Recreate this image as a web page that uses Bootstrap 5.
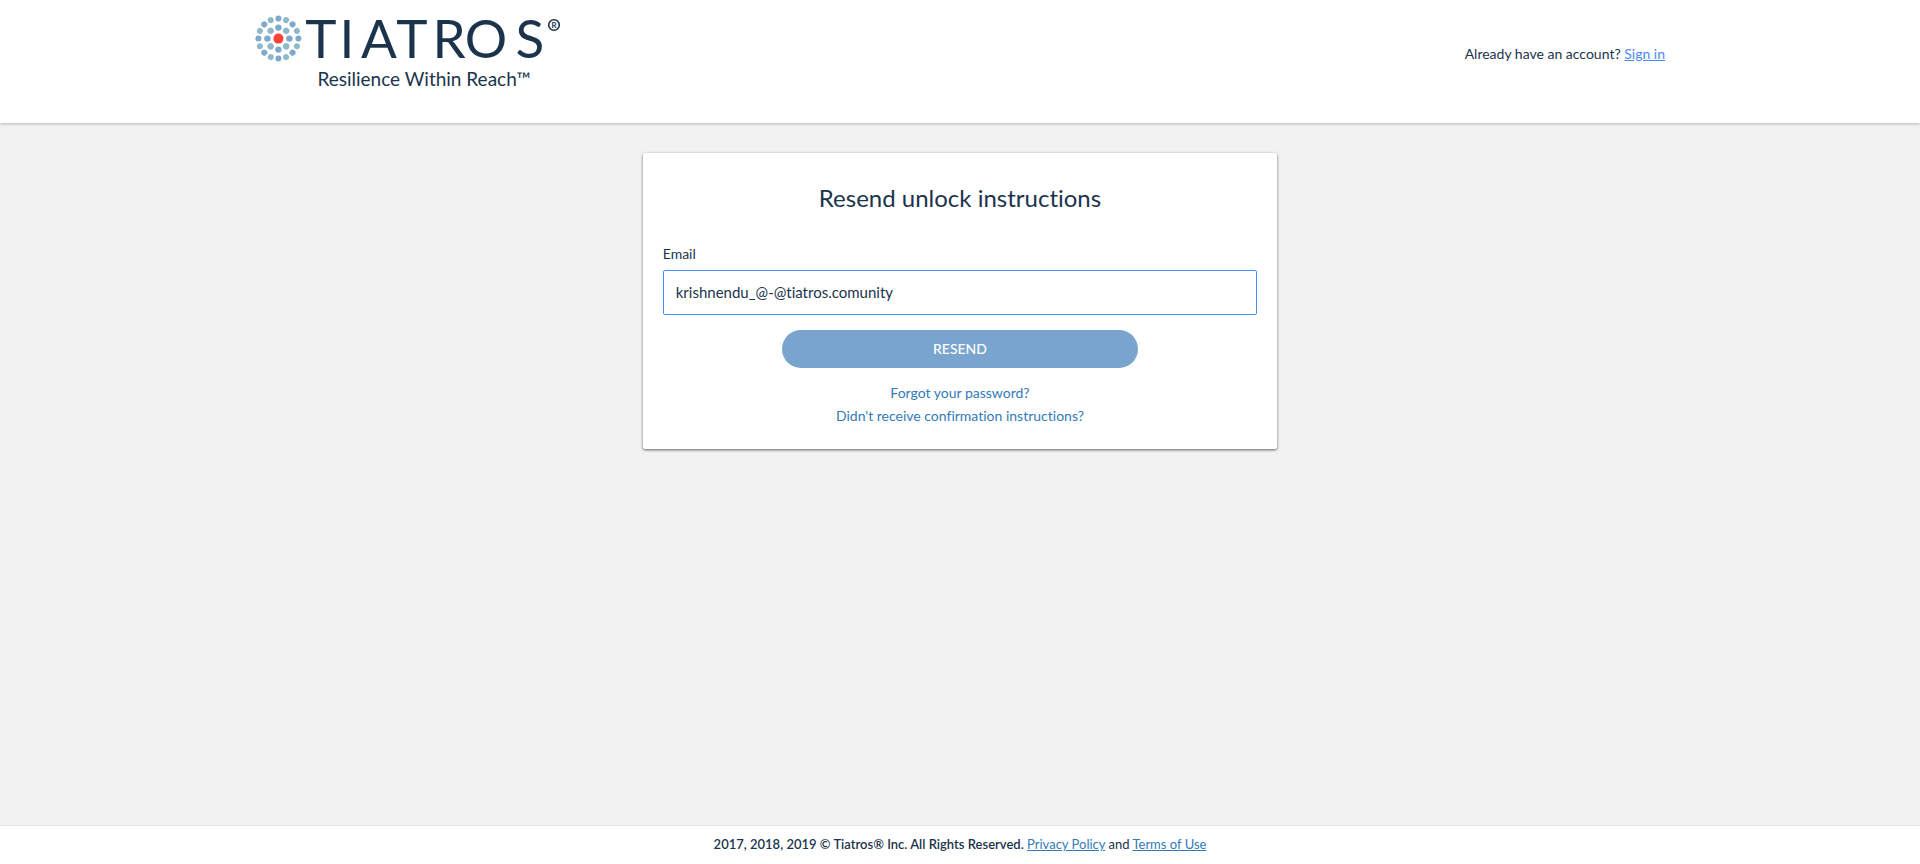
<!DOCTYPE html>
<html lang="en">
<head>
<meta charset="utf-8">
<meta name="viewport" content="width=device-width, initial-scale=1">
<title>Tiatros - Resend unlock instructions</title>
<link href="https://cdn.jsdelivr.net/npm/bootstrap@5.3.0/dist/css/bootstrap.min.css" rel="stylesheet">
<style>
  body { font-family: Lato, "Liberation Sans", sans-serif; font-size: 14px; line-height: 22px; color: #1b344c; background: #f2f2f2; }
  body, input, button { font-variant-ligatures: none; }
  a { color: #337ab7; }
  .page-width { width: 75%; padding: 0 15px; }
  .site-header { min-height: 123px; padding-top: 12px; box-shadow: 0 1px 3px rgba(0, 0, 0, .25); }
  .brand { width: 310px; color: #1b344c; }
  .brand-mark { width: 310px; height: 54px; overflow: visible; }
  .tagline { font-size: 19px; line-height: 26px; padding-left: 28px; }
  .account { padding-top: 31px; }
  .account a { color: #4a8af4; }
  .unlock-card { width: 45%; margin-top: 30px; padding: 30px 20px 22px; border: 0; border-radius: 2px; box-shadow: 0 1px 3px rgba(0, 0, 0, .6); color: inherit; }
  .unlock-card h1 { font-size: 24px; line-height: 30px; font-weight: 400; margin-bottom: 30px; }
  .unlock-card label { margin-bottom: 5px; }
  .unlock-card .form-control { height: 45px; padding: 0 12px 2px; font-size: 15px; color: #1b344c; border: 1px solid #4a8ef5; border-radius: 2px; box-shadow: none; margin-bottom: 15px; }
  .btn-resend { width: 60%; height: 38px; padding: 0 0 2px; font-size: 14px; font-weight: 500; background: #79a4ce; color: #fff; margin-bottom: 13px; }
  .btn-resend:hover { background: #6794c0; color: #fff; }
  .unlock-links { line-height: 23px; }
  .site-footer { min-height: 39px; padding: 7px 0; border-top: 1px solid #e4e4e4; font-size: 13px; }
</style>
</head>
<body class="d-flex flex-column min-vh-100">
<header class="site-header bg-white">
  <div class="page-width mx-auto d-flex justify-content-between align-items-start">
    <a class="brand d-block text-decoration-none" href="#" aria-label="Tiatros home">
      <svg class="brand-mark d-block" viewBox="255 12 310 54">
        <defs>
          <circle id="o" cy="-20" r="3"/>
          <circle id="i" cy="-11" r="3.2"/>
        </defs>
        <g transform="translate(278.4 38.6)">
          <g fill="#7ea8cd">
            <use href="#o"/><use href="#o" transform="rotate(45)"/><use href="#o" transform="rotate(90)"/><use href="#o" transform="rotate(135)"/>
            <use href="#o" transform="rotate(180)"/><use href="#o" transform="rotate(225)"/><use href="#o" transform="rotate(270)"/><use href="#o" transform="rotate(315)"/>
            <use href="#i"/><use href="#i" transform="rotate(90)"/><use href="#i" transform="rotate(180)"/><use href="#i" transform="rotate(270)"/>
          </g>
          <g fill="#90b8c8">
            <use href="#o" transform="rotate(22.5)"/><use href="#o" transform="rotate(67.5)"/><use href="#o" transform="rotate(112.5)"/><use href="#o" transform="rotate(157.5)"/>
            <use href="#o" transform="rotate(202.5)"/><use href="#o" transform="rotate(247.5)"/><use href="#o" transform="rotate(292.5)"/><use href="#o" transform="rotate(337.5)"/>
            <use href="#i" transform="rotate(45)"/><use href="#i" transform="rotate(135)"/><use href="#i" transform="rotate(225)"/><use href="#i" transform="rotate(315)"/>
          </g>
          <circle r="5" fill="#fa4336"/>
        </g>
        <text x="321 347 379 412 449 486 530" y="58" text-anchor="middle" font-size="53" fill="#1b344c">TIATROS</text>
        <circle cx="554" cy="25" r="5.3" fill="none" stroke="#1b344c" stroke-width="1.6"/>
        <text x="554" y="28" text-anchor="middle" font-size="8" font-weight="700" fill="#1b344c">R</text>
      </svg>
      <div class="tagline text-center">Resilience Within Reach™</div>
    </a>
    <div class="account">Already have an account? <a href="#">Sign in</a></div>
  </div>
</header>

<main class="page-width mx-auto flex-grow-1">
  <section class="card unlock-card mx-auto">
    <h1 class="text-center">Resend unlock instructions</h1>
    <form class="d-flex flex-column">
      <label for="email">Email</label>
      <input class="form-control" type="email" id="email" value="krishnendu_@-@tiatros.comunity">
      <button class="btn btn-resend rounded-pill border-0 mx-auto" type="submit">RESEND</button>
    </form>
    <nav class="unlock-links d-flex flex-column align-items-center">
      <a class="text-decoration-none" href="#">Forgot your password?</a>
      <a class="text-decoration-none" href="#">Didn't receive confirmation instructions?</a>
    </nav>
  </section>
</main>

<footer class="site-footer bg-white text-center">
  <span class="fw-semibold">2017, 2018, 2019 © Tiatros® Inc. All Rights Reserved.</span>
  <a href="#">Privacy Policy</a> and <a href="#">Terms of Use</a>
</footer>
<script src="https://cdn.jsdelivr.net/npm/bootstrap@5.3.0/dist/js/bootstrap.bundle.min.js"></script>
</body>
</html>
